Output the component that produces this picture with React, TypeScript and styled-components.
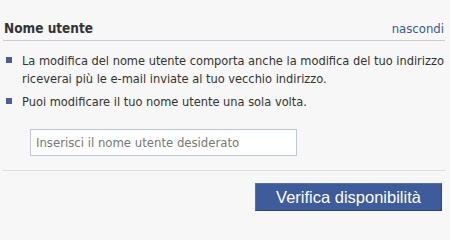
import React from 'react'
import styled, { createGlobalStyle } from 'styled-components'

const GlobalStyle = createGlobalStyle`
	html, body {
		margin: 0;
		background: #f7f7f7;
		font-family: 'DejaVu Sans', Tahoma, sans-serif;
		color: #333;
	}
`

const Panel = styled.div`
	width: 450px;
	height: 221px;
	overflow: hidden;
	padding: 0 5px 0 3px;
	box-sizing: border-box;
`

const Header = styled.div`
	display: flex;
	justify-content: space-between;
	align-items: flex-end;
	height: 41px;
	padding: 0 1px 4px 1px;
	box-sizing: border-box;
	border-bottom: 1px solid #c9ccd6;
`

const Title = styled.h2`
	margin: 0;
	font-family: 'DejaVu Sans Condensed', 'DejaVu Sans', Tahoma, sans-serif;
	font-size: 13.5px;
	font-weight: bold;
	color: #333;
`

const HideLink = styled.a`
	font-family: 'DejaVu Sans Condensed', 'DejaVu Sans', Tahoma, sans-serif;
	font-size: 13px;
	color: #3b5998;
	text-decoration: none;
	cursor: pointer;
`

const Notes = styled.ul`
	list-style: none;
	margin: 0;
	padding: 11px 0 0 0;
	white-space: nowrap;
`

const Note = styled.li`
	display: flex;
	gap: 10px;
	font-family: 'DejaVu Sans Condensed', 'DejaVu Sans', Tahoma, sans-serif;
	font-size: 12.7px;
	line-height: 18px;
	margin-bottom: 5px;
	&::before {
		content: '';
		flex: none;
		width: 6px;
		height: 6px;
		margin: 5px 0 0 3px;
		background: #4b5e98;
	}
`

const Field = styled.div`
	padding: 13px 0 14px 27px;
	border-bottom: 1px solid #dcdde0;
`

const NameInput = styled.input`
	display: block;
	width: 267px;
	height: 27px;
	box-sizing: border-box;
	border: 1px solid #bdc7d8;
	background: #fff;
	padding: 0 5px;
	font-family: 'DejaVu Sans Condensed', 'DejaVu Sans', Tahoma, sans-serif;
	font-size: 13px;
	color: #333;
	&::placeholder {
		color: #777;
	}
`

const Actions = styled.div`
	display: flex;
	justify-content: flex-end;
	padding: 12px 3px 0 0;
`

const CheckButton = styled.button`
	width: 187px;
	height: 28px;
	border: 1px solid #2c437a;
	border-top-color: #5670a8;
	border-left-color: #5670a8;
	background: #3e5b9b;
	color: #fff;
	font-family: 'Liberation Sans', Arial, sans-serif;
	font-size: 16.5px;
	cursor: pointer;
`

export default function App() {
	return (
		<>
			<GlobalStyle />
			<Panel>
				<Header>
					<Title>Nome utente</Title>
					<HideLink>nascondi</HideLink>
				</Header>
				<Notes>
					<Note>
						<span>
							La modifica del nome utente comporta anche la modifica del tuo indirizzo
							<br />
							riceverai più le e-mail inviate al tuo vecchio indirizzo.
						</span>
					</Note>
					<Note>Puoi modificare il tuo nome utente una sola volta.</Note>
				</Notes>
				<Field>
					<NameInput placeholder="Inserisci il nome utente desiderato" />
				</Field>
				<Actions>
					<CheckButton>Verifica disponibilità</CheckButton>
				</Actions>
			</Panel>
		</>
	)
}
